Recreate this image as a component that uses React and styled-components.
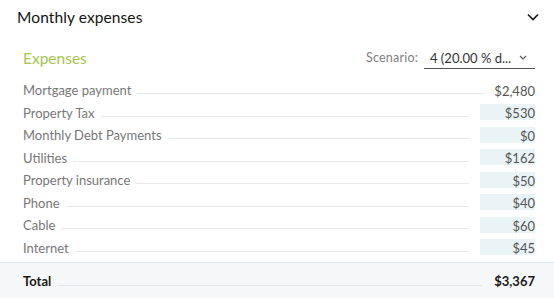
import styled, { createGlobalStyle } from "styled-components";

const expenses = [
  { label: "Mortgage payment", value: "$2,480", editable: false },
  { label: "Property Tax", value: "$530", editable: true },
  { label: "Monthly Debt Payments", value: "$0", editable: true },
  { label: "Utilities", value: "$162", editable: true },
  { label: "Property insurance", value: "$50", editable: true },
  { label: "Phone", value: "$40", editable: true },
  { label: "Cable", value: "$60", editable: true },
  { label: "Internet", value: "$45", editable: true },
];

export default function App() {
  return (
    <>
      <GlobalStyle />
      <Panel>
        <Header>
          <HeaderTitle>Monthly expenses</HeaderTitle>
          <svg width="12" height="8" viewBox="0 0 12 8">
            <polyline
              points="1,1.5 6,6.5 11,1.5"
              fill="none"
              stroke="#1a1a1a"
              strokeWidth="1.6"
            />
          </svg>
        </Header>
        <Body>
          <TitleRow>
            <SectionTitle>Expenses</SectionTitle>
            <Scenario>
              <ScenarioLabel>Scenario:</ScenarioLabel>
              <Select>
                <span>4 (20.00 % d...</span>
                <svg width="8" height="5" viewBox="0 0 8 5">
                  <polyline
                    points="1,1 4,4 7,1"
                    fill="none"
                    stroke="#555"
                    strokeWidth="1.1"
                  />
                </svg>
              </Select>
            </Scenario>
          </TitleRow>
          <List>
            {expenses.map((item) => (
              <Row key={item.label}>
                <Label>{item.label}</Label>
                <Leader />
                <Value $editable={item.editable}>{item.value}</Value>
              </Row>
            ))}
          </List>
        </Body>
        <TotalRow>
          <TotalLabel>Total</TotalLabel>
          <Leader />
          <TotalValue>$3,367</TotalValue>
        </TotalRow>
      </Panel>
    </>
  );
}

const GlobalStyle = createGlobalStyle`
  body {
    margin: 0;
    background: #fff;
    font-family: Lato, "Open Sans", sans-serif;
  }
`;

const Panel = styled.div`
  width: 554px;
  display: flex;
  flex-direction: column;
`;

const Header = styled.div`
  height: 34px;
  display: flex;
  align-items: center;
  justify-content: space-between;
  padding: 0 15px 0 17px;
`;

const HeaderTitle = styled.h2`
  margin: 0;
  font-size: 15.5px;
  font-weight: 400;
  letter-spacing: 0.1px;
  color: #141414;
`;

const Body = styled.div`
  padding: 8px 19px 0 23px;
`;

const TitleRow = styled.div`
  height: 32px;
  display: flex;
  align-items: center;
  justify-content: space-between;
`;

const SectionTitle = styled.h3`
  margin: 0;
  font-size: 15.5px;
  font-weight: 400;
  color: #a5c650;
`;

const Scenario = styled.div`
  display: flex;
  align-items: center;
  gap: 6px;
  margin-top: -2px;
`;

const ScenarioLabel = styled.span`
  font-size: 12.5px;
  letter-spacing: 0.2px;
  color: #808080;
`;

const Select = styled.div`
  width: 111px;
  box-sizing: border-box;
  height: 24px;
  display: flex;
  align-items: center;
  justify-content: space-between;
  padding: 2px 8px 0 6px;
  border-bottom: 1px solid #555;
  font-size: 13px;
  color: #333;
`;

const List = styled.div`
  margin-top: 4.5px;
  margin-bottom: 3.5px;
`;

const Row = styled.div`
  height: 22.5px;
  display: flex;
  align-items: center;
`;

const Label = styled.span`
  font-size: 13px;
  line-height: 16px;
  padding-top: 1px;
  color: #777;
  white-space: nowrap;
`;

const Leader = styled.span`
  flex: 1;
  align-self: center;
  height: 1px;
  margin: 8px 0 0 6px;
  background: #e8e8e8;
`;

const Value = styled.span`
  box-sizing: border-box;
  height: 16px;
  line-height: 16px;
  padding-top: 1px;
  font-size: 13px;
  color: #555;
  text-align: right;
  ${({ $editable }) =>
    $editable
      ? `
        width: 55px;
        margin-left: 11px;
        background: #eaf4f7;
      `
      : `
        margin-left: 10px;
      `}
`;

const TotalRow = styled.div`
  height: 36px;
  display: flex;
  align-items: center;
  padding: 0 19px 0 23px;
  background: #f6f7f9;
  border-top: 1px solid #e1e5e8;
`;

const TotalLabel = styled.span`
  font-size: 13px;
  font-weight: 700;
  color: #1a1a1a;
`;

const TotalValue = styled.span`
  margin-left: 12px;
  font-size: 13px;
  font-weight: 700;
  color: #1a1a1a;
`;
